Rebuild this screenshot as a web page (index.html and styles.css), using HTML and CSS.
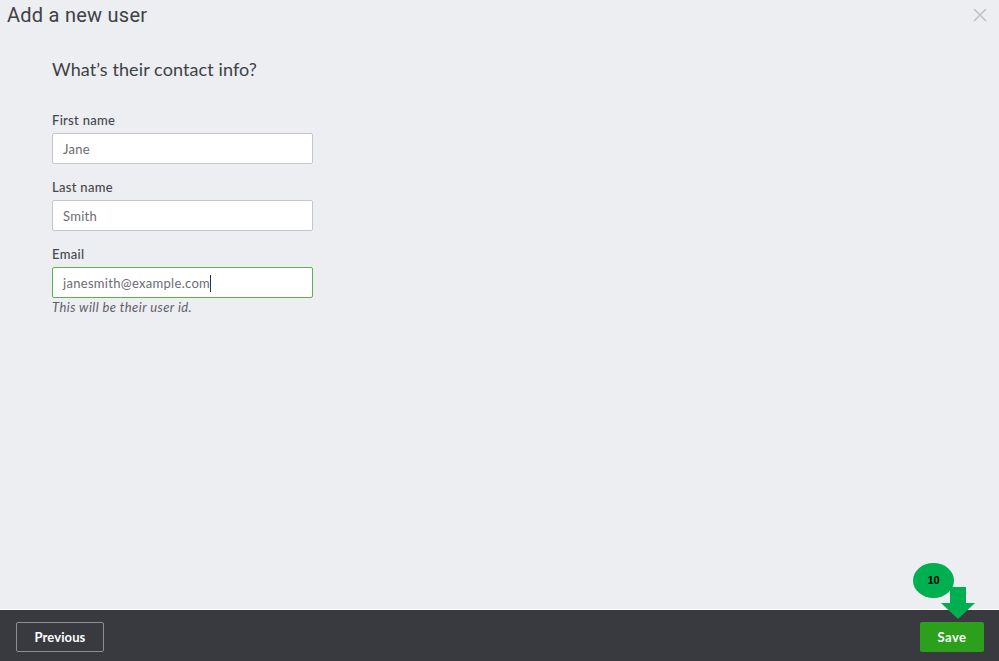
FILE: index.html
```html
<!DOCTYPE html>
<html lang="en">
<head>
<meta charset="utf-8">
<title>Add a new user</title>
<link rel="stylesheet" href="styles.css">
</head>
<body>
<div class="page">
  <header class="top">
    <h1 class="title">Add a new user</h1>
    <svg class="close" width="14" height="14" viewBox="0 0 14 14" aria-hidden="true"><path d="M1 1L13 13M13 1L1 13" fill="none" stroke="#bfc2c8" stroke-width="1.6"/></svg>
  </header>
  <main class="content">
    <h2 class="subtitle">What’s their contact info?</h2>
    <form class="form">
      <div class="field">
        <label class="label">First name</label>
        <div class="input">Jane</div>
      </div>
      <div class="field">
        <label class="label">Last name</label>
        <div class="input">Smith</div>
      </div>
      <div class="field">
        <label class="label">Email</label>
        <div class="input input-focus">janesmith@example.com<span class="caret"></span></div>
        <p class="hint">This will be their user id.</p>
      </div>
    </form>
  </main>
  <footer class="bottom">
    <button class="btn btn-prev" type="button">Previous</button>
    <button class="btn btn-save" type="button">Save</button>
  </footer>
  <div class="bubble">10</div>
  <svg class="arrow" width="34" height="33" viewBox="0 0 34 33" aria-hidden="true"><path d="M9 0H25V16H34L17 32L0 16H9Z" fill="#00b050"/></svg>
</div>
</body>
</html>
```
FILE: styles.css
```css
* { box-sizing: border-box; }
html, body { margin: 0; padding: 0; }
body { font-family: "Lato", "Liberation Sans", sans-serif; color: #393a3d; }
.page {
  position: relative;
  width: 999px;
  height: 661px;
  overflow: hidden;
  display: flex;
  flex-direction: column;
  background: #eceef2;
}
.top {
  display: flex;
  justify-content: space-between;
  align-items: center;
  height: 30px;
  padding: 0 12px 0 7px;
  flex: none;
}
.title {
  margin: 0;
  font-family: "Roboto", sans-serif;
  font-size: 20px;
  font-weight: 400;
  letter-spacing: 0.25px;
  line-height: 30px;
  color: #404145;
}
.close { display: block; }
.content { flex: 1; padding: 27px 0 0 52px; }
.subtitle {
  margin: 0 0 31px;
  font-size: 18px;
  font-weight: 400;
  line-height: 24px;
  letter-spacing: 0.1px;
  color: #404145;
}
.form { width: 261px; display: flex; flex-direction: column; gap: 15px; }
.label {
  display: block;
  font-size: 13px;
  font-weight: 500;
  line-height: 16px;
  letter-spacing: 0.3px;
  margin-bottom: 5px;
  color: #46474b;
}
.input {
  height: 31px;
  padding: 0 10px;
  background: #fff;
  border: 1px solid #c4c6cc;
  border-radius: 2px;
  font-size: 13px;
  line-height: 30px;
  letter-spacing: 0.3px;
  color: #6b6c72;
}
.input-focus { border-color: #5cb04f; }
.caret {
  display: inline-block;
  width: 1px;
  height: 17px;
  margin-left: 0;
  vertical-align: -4px;
  background: #333;
}
.hint {
  margin: 1px 0 0;
  font-size: 13px;
  font-style: italic;
  line-height: 16px;
  letter-spacing: 0.42px;
  color: #5f6066;
}
.bottom {
  flex: none;
  height: 52px;
  display: flex;
  justify-content: space-between;
  align-items: center;
  padding: 2px 15px 0 16px;
  background: #393a3f;
  border-top: 1px solid #fff;
}
.btn {
  height: 30px;
  border-radius: 2px;
  font-family: "Lato", sans-serif;
  font-size: 13px;
  font-weight: 700;
  letter-spacing: 0.1px;
  color: #fff;
  padding: 0;
}
.btn-prev { width: 88px; background: transparent; border: 1px solid #8d8e92; }
.btn-save { width: 64px; background: #2ca01c; border: 0; letter-spacing: 0.5px; }
.bubble {
  position: absolute;
  left: 913px;
  top: 563px;
  width: 41px;
  height: 35px;
  border-radius: 50%;
  background: #00b050;
  display: flex;
  align-items: center;
  justify-content: center;
  padding-bottom: 1px;
  font-family: "Liberation Sans", sans-serif;
  font-size: 11px;
  font-weight: 700;
  color: #000;
}
.arrow { position: absolute; left: 941px; top: 587px; display: block; }
```
